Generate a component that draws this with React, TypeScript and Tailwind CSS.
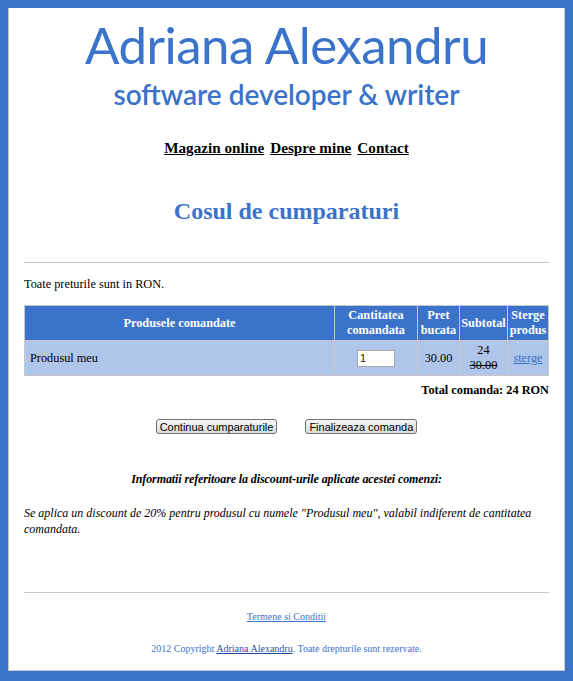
import React from "react";

const serif = { fontFamily: '"Liberation Serif", "Times New Roman", serif' };

function NavLink({ children }: { children: React.ReactNode }) {
  return (
    <a href="#" className="font-bold text-black underline">
      {children}
    </a>
  );
}

function Button({ children }: { children: React.ReactNode }) {
  return (
    <button
      className="h-[15px] rounded-[3px] border border-[#707070] bg-gradient-to-b from-[#f6f6f6] to-[#dcdcdc] px-[3px] text-[11px] leading-[12px] text-black"
      style={{ fontFamily: '"Liberation Sans", Tahoma, sans-serif' }}
    >
      {children}
    </button>
  );
}

export default function App() {
  return (
    <div className="min-h-[681px] bg-[#3a73c9] px-2 pt-2 pb-[10px]" style={serif}>
      <div className="h-[663px] border border-[#c8c8c8] border-t-0 bg-white px-[15px] text-[12.3px] text-black">
        {/* header */}
        <div className="pt-[9px] text-center text-[#3a73c9]" style={{ fontFamily: 'Lato, "Open Sans", sans-serif' }}>
          <div className="text-[51px] leading-[56px] tracking-[-0.5px]">Adriana Alexandru</div>
          <div className="mt-[5px] text-[28px] font-semibold leading-[32px]">software developer &amp; writer</div>
        </div>

        <nav className="mt-[29px] flex justify-center gap-[6px] text-[15.2px] leading-[18px]">
          <NavLink>Magazin online</NavLink>
          <NavLink>Despre mine</NavLink>
          <NavLink>Contact</NavLink>
        </nav>

        <h1 className="mt-[40px] text-center text-[24px] font-bold leading-[28px] text-[#3a73c9]">
          Cosul de cumparaturi
        </h1>

        <hr className="mt-[37px] border-t border-[#c8c8c8]" />

        <p className="mt-[13px] leading-[16px]">Toate preturile sunt in RON.</p>

        <table className="mt-[13px] w-full border-collapse border border-[#c8c8c8]">
          <thead>
            <tr className="h-[35px] bg-[#3a73c9] font-bold leading-[15px] text-white">
              <th className="border border-[#c8c8c8] px-[1px]">Produsele comandate</th>
              <th className="w-[83px] border border-[#c8c8c8] px-[1px]">
                Cantitatea
                <br />
                comandata
              </th>
              <th className="w-[42px] border border-[#c8c8c8] px-[1px]">
                Pret
                <br />
                bucata
              </th>
              <th className="w-[48px] border border-[#c8c8c8] px-[1px]">Subtotal</th>
              <th className="w-[41px] border border-[#c8c8c8] px-[1px]">
                Sterge
                <br />
                produs
              </th>
            </tr>
          </thead>
          <tbody>
            <tr className="h-[35px] bg-[#afc5e9] leading-[15px]">
              <td className="border border-[#c8c8c8] px-[5px]">Produsul meu</td>
              <td className="border border-[#c8c8c8] text-center">
                <input
                  defaultValue="1"
                  className="h-[17px] w-[38px] border border-[#a9a9a9] bg-white px-[2px] text-[11px] text-[#3a1010] outline-none"
                  style={{ fontFamily: '"Liberation Sans", Tahoma, sans-serif' }}
                />
              </td>
              <td className="border border-[#c8c8c8] text-center">30.00</td>
              <td className="border border-[#c8c8c8] text-center">
                24
                <br />
                <span className="line-through">30.00</span>
              </td>
              <td className="border border-[#c8c8c8] text-center">
                <a href="#" className="text-[#3a73c9] underline">
                  sterge
                </a>
              </td>
            </tr>
          </tbody>
        </table>

        <p className="mt-[6px] text-right font-bold leading-[16px]">Total comanda: 24 RON</p>

        <div className="mt-[21px] flex justify-center gap-[28px]">
          <Button>Continua cumparaturile</Button>
          <Button>Finalizeaza comanda</Button>
        </div>

        <p className="mt-[37px] text-center text-[12px] font-bold italic leading-[16px] tracking-[-0.1px]">
          Informatii referitoare la discount-urile aplicate acestei comenzi:
        </p>

        <p className="mt-[18px] text-[12px] italic leading-[16px]">
          Se aplica un discount de 20% pentru produsul cu numele "Produsul meu", valabil indiferent de cantitatea
          comandata.
        </p>

        <hr className="mt-[55px] border-t border-[#c8c8c8]" />

        <p className="mt-[17px] text-center text-[10px] leading-[13px]">
          <a href="#" className="text-[#3a73c9] underline">
            Termene si Conditii
          </a>
        </p>

        <p className="mt-[19px] text-center text-[10px] leading-[13px] text-[#3a73c9]">
          2012 Copyright{" "}
          <a href="#" className="text-[#1f4f9a] underline">
            Adriana Alexandru
          </a>
          . Toate drepturile sunt rezervate.
        </p>
      </div>
    </div>
  );
}
